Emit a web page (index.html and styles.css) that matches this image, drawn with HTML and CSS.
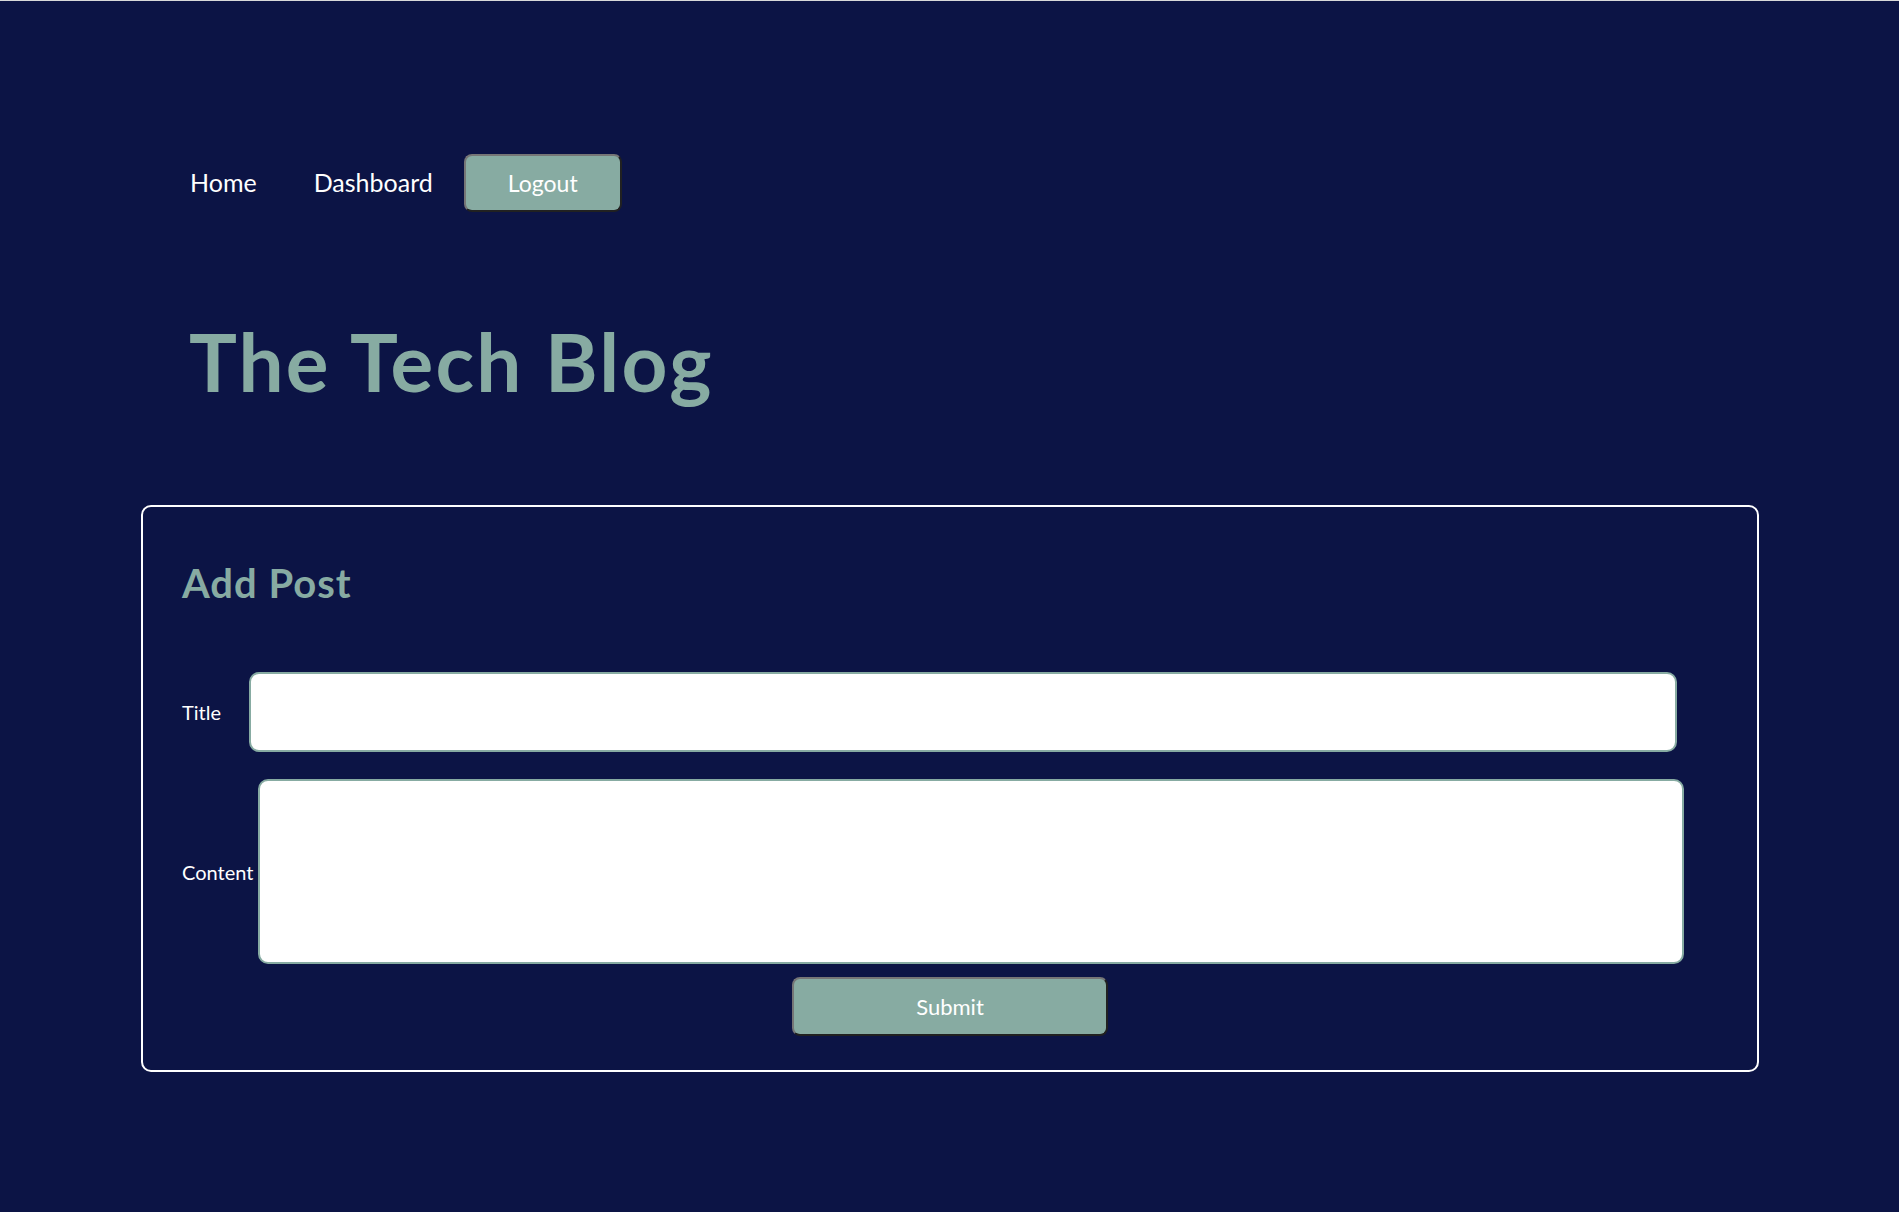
FILE: index.html
```html
<!DOCTYPE html>
<html lang="en">
<head>
<meta charset="utf-8">
<title>The Tech Blog</title>
<link rel="stylesheet" href="styles.css">
</head>
<body>
  <header class="site-header">
    <nav class="nav">
      <a class="nav-link nav-link--home" href="#">Home</a>
      <a class="nav-link nav-link--dash" href="#">Dashboard</a>
      <button class="btn btn--logout" type="button">Logout</button>
    </nav>
    <h1 class="site-title">The Tech Blog</h1>
  </header>
  <main class="main">
    <section class="card">
      <h2 class="card-title">Add Post</h2>
      <form class="post-form">
        <div class="field field--title">
          <label class="field-label field-label--title" for="title">Title</label>
          <input class="field-input" id="title" type="text">
        </div>
        <div class="field field--content">
          <label class="field-label field-label--content" for="content">Content</label>
          <textarea class="field-textarea" id="content"></textarea>
        </div>
        <div class="actions">
          <button class="btn btn--submit" type="submit">Submit</button>
        </div>
      </form>
    </section>
  </main>
</body>
</html>
```

FILE: styles.css
```css
html {
  background: #0c1445;
}

body {
  margin: 0;
  border-top: 1px solid #d9d9d9;
  background: #0c1445;
  color: #ffffff;
  font-family: Lato, "Open Sans", sans-serif;
  min-height: 1211px;
}

.site-header {
  padding-top: 153px;
}

.nav {
  display: flex;
  align-items: baseline;
  padding-left: 190px;
}

.nav-link {
  color: #ffffff;
  text-decoration: none;
  font-size: 25px;
}

.nav-link--home {
  margin-right: 57px;
}

.nav-link--dash {
  margin-right: 31px;
}

.btn {
  box-sizing: border-box;
  background: #87aba2;
  color: #ffffff;
  border: 2px outset #767676;
  border-radius: 8px;
  font-family: Lato, "Open Sans", sans-serif;
  padding: 0;
  cursor: pointer;
}

.btn--logout {
  width: 158px;
  height: 58px;
  font-size: 23px;
}

.site-title {
  margin: 101px 0 0;
  padding-left: 189px;
  color: #87aba2;
  font-size: 80px;
  font-weight: 700;
  line-height: 96px;
  letter-spacing: 2.2px;
}

.main {
  padding: 96px 140px 0 141px;
}

.card {
  box-sizing: border-box;
  border: 2px solid #ffffff;
  border-radius: 10px;
  padding: 52px 0 34px 39px;
  height: 567px;
}

.card-title {
  margin: 0;
  color: #87aba2;
  font-size: 40px;
  font-weight: 700;
  line-height: 48px;
  letter-spacing: 1px;
}

.post-form {
  display: flex;
  flex-direction: column;
  margin-top: 65px;
}

.field {
  display: flex;
  align-items: center;
}

.field--content {
  margin-top: 27px;
}

.field-label {
  font-size: 20px;
  color: #ffffff;
}

.field-label--title {
  width: 67px;
}

.field-label--content {
  width: 76px;
}

.field-input,
.field-textarea {
  box-sizing: border-box;
  background: #ffffff;
  border: 2px solid #87aba2;
  border-radius: 10px;
  margin: 0;
  padding: 6px 10px;
  font-family: Lato, "Open Sans", sans-serif;
  font-size: 20px;
  resize: none;
}

.field-input {
  width: 1428px;
  height: 80px;
}

.field-textarea {
  width: 1426px;
  height: 185px;
}

.actions {
  display: flex;
  justify-content: center;
  margin-top: 13px;
  margin-left: -39px;
}

.btn--submit {
  width: 316px;
  height: 59px;
  font-size: 22px;
}
```
